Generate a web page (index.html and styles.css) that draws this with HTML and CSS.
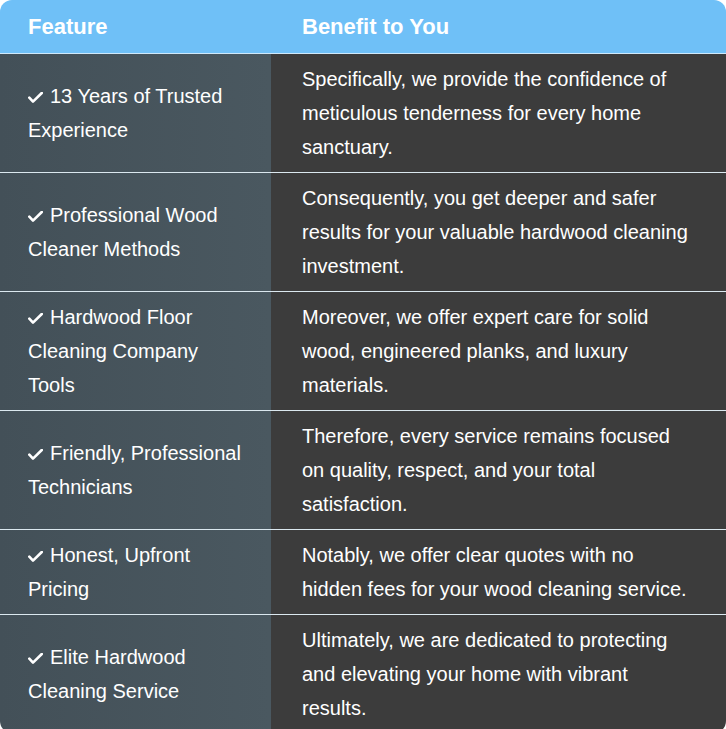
FILE: index.html
```html
<!DOCTYPE html>
<html>
<head>
<meta charset="utf-8">
<link rel="stylesheet" href="styles.css">
</head>
<body>
<table class="ftable">
  <thead>
    <tr><th class="c1">Feature</th><th class="c2">Benefit to You</th></tr>
  </thead>
  <tbody>
    <tr><td class="c1"><svg class="chk" viewBox="0 0 15 11"><path d="M1.3 5.6 L5 9.6 L13.8 1"/></svg>13 Years of Trusted Experience</td><td class="c2">Specifically, we provide the confidence of meticulous tenderness for every home sanctuary.</td></tr>
    <tr><td class="c1"><svg class="chk" viewBox="0 0 15 11"><path d="M1.3 5.6 L5 9.6 L13.8 1"/></svg>Professional Wood Cleaner Methods</td><td class="c2">Consequently, you get deeper and safer results for your valuable hardwood cleaning investment.</td></tr>
    <tr><td class="c1"><svg class="chk" viewBox="0 0 15 11"><path d="M1.3 5.6 L5 9.6 L13.8 1"/></svg>Hardwood Floor Cleaning Company Tools</td><td class="c2">Moreover, we offer expert care for solid wood, engineered planks, and luxury materials.</td></tr>
    <tr><td class="c1"><svg class="chk" viewBox="0 0 15 11"><path d="M1.3 5.6 L5 9.6 L13.8 1"/></svg>Friendly, Professional Technicians</td><td class="c2">Therefore, every service remains focused on quality, respect, and your total satisfaction.</td></tr>
    <tr><td class="c1"><svg class="chk" viewBox="0 0 15 11"><path d="M1.3 5.6 L5 9.6 L13.8 1"/></svg>Honest, Upfront Pricing</td><td class="c2">Notably, we offer clear quotes with no hidden fees for your wood cleaning service.</td></tr>
    <tr><td class="c1"><svg class="chk" viewBox="0 0 15 11"><path d="M1.3 5.6 L5 9.6 L13.8 1"/></svg>Elite Hardwood Cleaning Service</td><td class="c2">Ultimately, we are dedicated to protecting and elevating your home with vibrant results.</td></tr>
  </tbody>
</table>
</body>
</html>
```
FILE: styles.css
```css
html, body {
  margin: 0;
  padding: 0;
  background: #ffffff;
}
.ftable {
  width: 726px;
  border-collapse: separate;
  border-spacing: 0;
  border-radius: 12px;
  overflow: hidden;
  font-family: "Liberation Sans", Arial, sans-serif;
  color: #ffffff;
}
.ftable th {
  background: #6fc0f7;
  font-size: 22px;
  font-weight: bold;
  text-align: left;
  height: 53px;
  padding: 0 28px;
  border-bottom: 1px solid #cfe9fb;
  vertical-align: middle;
  line-height: 24px;
}
.ftable th.c2 {
  padding-left: 31px;
}
.ftable td {
  font-size: 20px;
  line-height: 34px;
  vertical-align: middle;
  padding: 8px 28px;
  border-bottom: 1px solid #dbe8ef;
}
.ftable tbody tr:last-child td {
  border-bottom: none;
}
.chk {
  display: inline-block;
  width: 15px;
  height: 11px;
  margin-right: 7px;
  vertical-align: 0;
  fill: none;
  stroke: #ffffff;
  stroke-width: 2.6;
  stroke-linecap: round;
  stroke-linejoin: round;
}
.ftable td.c1 {
  width: 215px;
  background: linear-gradient(90deg, #435058 0%, #4a5860 100%);
  padding-right: 28px;
}
.ftable td.c2 {
  background: #3c3c3c;
  padding-left: 31px;
  padding-right: 36px;
}
```
